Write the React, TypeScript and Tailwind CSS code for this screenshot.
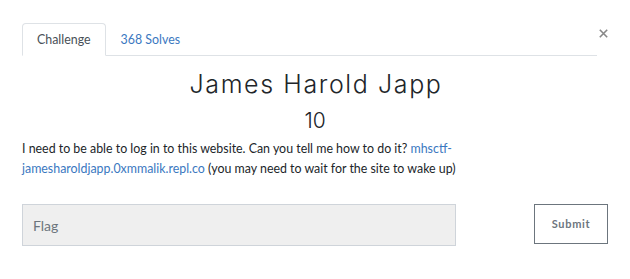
import React from "react";

export default function App() {
  return (
    <div
      className="w-[630px] h-[279px] bg-white text-[#212529] pt-[23px] pl-[22px]"
      style={{ fontFamily: "Lato, 'Open Sans', sans-serif" }}
    >
      <div className="flex items-start">
        <ul className="flex w-[575px] border-b border-[#dee2e6] h-[33px]">
          <li className="h-[33px] px-[14px] py-[6px] leading-[20px] text-[12.4px] text-[#495057] bg-white border border-[#dee2e6] border-b-white rounded-t-[4px]">
            Challenge
          </li>
          <li className="h-[33px] px-[14px] py-[6px] leading-[20px] text-[12.4px] text-[#3b78bf] border border-transparent">
            368 Solves
          </li>
        </ul>
        <button className="ml-[2px] mt-[6px] w-[9px] h-[9px] text-[#888]">
          <svg width="9" height="9" viewBox="0 0 9 9" fill="none" stroke="currentColor" strokeWidth="1.6">
            <path d="M0.8 0.8 L8.2 8.2 M8.2 0.8 L0.8 8.2" />
          </svg>
        </button>
      </div>
      <div className="w-[586px]">
        <h2 className="mt-[12px] pl-[2px] text-center text-[25px] leading-[32px] tracking-[1.6px] font-[350] font-['Inter',sans-serif]">
          James Harold Japp
        </h2>
        <h3 className="mt-[8px] text-center text-[21px] leading-[26px] font-[350] font-['Inter',sans-serif]">10</h3>
        <p className="mt-[5px] text-[12.4px] leading-[20px] w-[440px]">
          I need to be able to log in to this website. Can you tell me how to do it?{" "}
          <a className="text-[#3b78bf]">mhsctf-jamesharoldjapp.0xmmalik.repl.co</a> (you may need to wait for the site to wake up)
        </p>
        <div className="mt-[25px] flex items-start">
          <div className="w-[434px] h-[42px] bg-[#efefef] border border-[#cfd4da] pl-[10px] flex items-center text-[14px] text-[#6c757d]">
            Flag
          </div>
          <button className="ml-[78px] w-[74px] h-[40px] border border-[#6c757d] text-[11px] font-bold tracking-[0.06em] text-[#6c757d]">
            Submit
          </button>
        </div>
      </div>
    </div>
  );
}
